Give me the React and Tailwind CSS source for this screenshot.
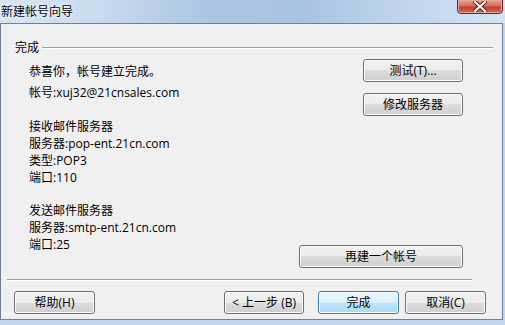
import React from "react";

const btn =
  "h-[23px] flex items-center justify-center rounded-[3px] border border-[#707070] bg-[linear-gradient(#f2f2f2_0%,#ebebeb_50%,#dddddd_50%,#cfcfcf_100%)] shadow-[inset_0_0_0_1px_#fbfbfb] text-[12px] text-black";
const btnDefault =
  "h-[23px] flex items-center justify-center rounded-[3px] border border-[#3c7fb1] bg-[linear-gradient(#eaf6fd_0%,#d9f0fc_50%,#bee6fd_50%,#a7d9f5_100%)] shadow-[inset_0_0_0_1px_#f4fbfe] text-[12px] text-black";

export default function App() {
  return (
    <div
      className="w-[505px] h-[325px] overflow-hidden flex flex-col bg-[#c3d5ea] text-black"
      style={{ fontFamily: '"Open Sans", "Noto Sans CJK SC", sans-serif' }}
    >
      {/* Title bar */}
      <div className="relative h-[23px] shrink-0 flex items-center bg-[linear-gradient(90deg,#d6e5f4_0%,#c7daee_20%,#aec6e2_40%,#a9c3e2_60%,#c0d5ec_80%,#d3e3f3_100%)]">
        <span className="pl-[1px] text-[12px] leading-[17px] text-black [text-shadow:0_0_6px_#ffffff,0_0_3px_#ffffff]">
          新建帐号向导
        </span>
        <div className="absolute right-[2px] top-[-1px] w-[46px] h-[15px] rounded-b-[4px] border border-[#6b2424] bg-[linear-gradient(#e8a193_0%,#d2705e_45%,#c0432c_55%,#d06a4f_100%)] shadow-[inset_0_0_0_1px_#eaa99a] flex items-center justify-center">
          <svg width="14" height="11" viewBox="0 0 14 11">
            <path
              d="M2 1 L12 10 M12 1 L2 10"
              stroke="#5a1c14"
              strokeWidth="4"
              strokeLinecap="square"
            />
            <path
              d="M2 1 L12 10 M12 1 L2 10"
              stroke="#ffffff"
              strokeWidth="2.2"
              strokeLinecap="square"
            />
          </svg>
        </div>
      </div>

      {/* Client area */}
      <div className="w-[503px] h-[297px] shrink-0 border border-[#6f8092] bg-[#f0f0f0] flex flex-col">
        {/* group header */}
        <div className="mt-[15px] h-[17px] flex items-center pl-[14px] pr-[9px]">
          <span className="text-[12px] leading-[17px]">完成</span>
          <div className="ml-[3px] flex-1 h-[2px] border-t border-[#a0a0a0] border-b border-b-white"></div>
        </div>

        {/* body */}
        <div className="mt-[3px] h-[210px] flex justify-between pl-[28px] pr-[39px]">
          <div className="pt-[4px] flex flex-col text-[12px] leading-[17px]">
            <div>恭喜你，帐号建立完成。</div>
            <div className="mt-[4px]">帐号:xuj32@21cnsales.com</div>
            <div className="mt-[17px]">接收邮件服务器</div>
            <div>服务器:pop-ent.21cn.com</div>
            <div>类型:POP3</div>
            <div>端口:110</div>
            <div className="mt-[16px]">发送邮件服务器</div>
            <div>服务器:smtp-ent.21cn.com</div>
            <div>端口:25</div>
          </div>
          <div className="flex flex-col items-end">
            <button className={`${btn} w-[100px]`}>测试(T)...</button>
            <button className={`${btn} w-[100px] mt-[11px]`}>修改服务器</button>
            <button className={`${btn} w-[164px] mt-auto mb-[1px]`}>再建一个帐号</button>
          </div>
        </div>

        {/* separator */}
        <div className="mt-[10px] ml-[6px] w-[465px] h-[2px] border-t border-[#a0a0a0] border-b border-b-white"></div>

        {/* bottom buttons */}
        <div className="mt-[10px] flex pl-[13px]">
          <button className={`${btn} w-[81px]`}>帮助(H)</button>
          <button className={`${btn} w-[80px] ml-[129px]`}>&lt; 上一步 (B)</button>
          <button className={`${btnDefault} w-[81px] ml-[14px]`}>完成</button>
          <button className={`${btn} w-[81px] ml-[6px]`}>取消(C)</button>
        </div>
      </div>
    </div>
  );
}
